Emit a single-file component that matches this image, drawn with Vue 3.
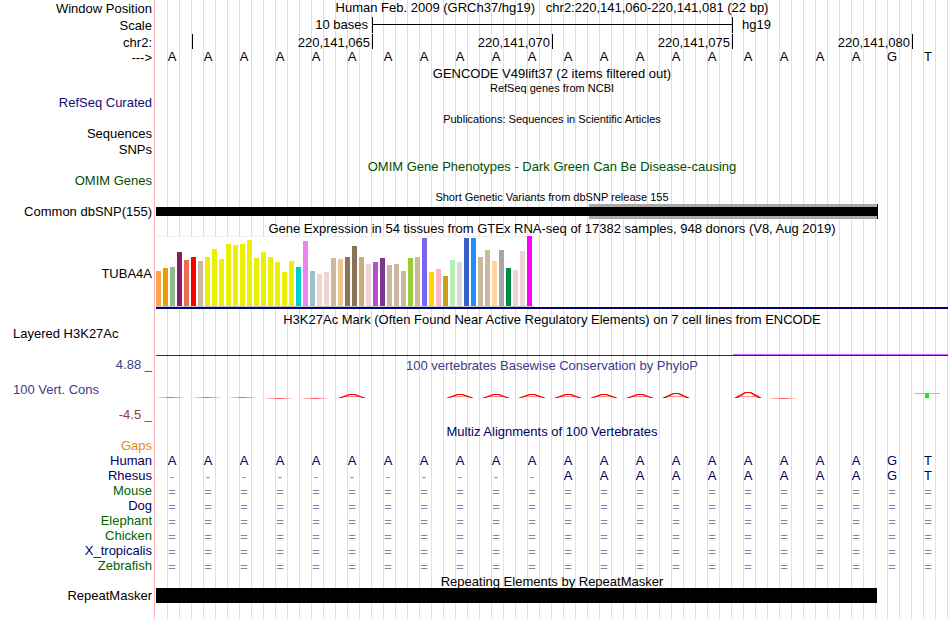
<template>
  <main class="browser">
    <div class="gutter"></div>
    <div class="guides">
      <span v-for="n in 66" :key="n" class="guide"></span>
    </div>

    <div class="tracks">
      <!-- Ruler -->
      <div class="row">
        <div class="label">Window Position</div>
        <h1 class="title">Human Feb. 2009 (GRCh37/hg19)&nbsp;&nbsp; chr2:220,141,060-220,141,081 (22 bp)</h1>
      </div>
      <div class="row">
        <div class="label">Scale</div>
        <div class="scale">
          <span class="scale-size">10 bases</span>
          <span class="scale-bar"><i></i></span>
          <span class="scale-db">hg19</span>
        </div>
      </div>
      <div class="row row-line">
        <div class="label">chr2:</div>
        <div class="ticks">
          <span v-for="(tick, i) in ticks" :key="i" class="tick">{{ tick }}</span>
        </div>
      </div>
      <div class="row">
        <div class="label">---&gt;</div>
        <div class="bases ruler-bases">
          <span v-for="(base, i) in human" :key="i">{{ base }}</span>
        </div>
      </div>

      <!-- Gene tracks -->
      <h2 class="title title-row">GENCODE V49lift37 (2 items filtered out)</h2>
      <h2 class="title title-row small">RefSeq genes from NCBI</h2>
      <div class="row row-item">
        <div class="label blue">RefSeq Curated</div>
      </div>
      <h2 class="title title-row small">Publications: Sequences in Scientific Articles</h2>
      <div class="row row-publication">
        <div class="label">Sequences</div>
      </div>
      <div class="row row-item">
        <div class="label">SNPs</div>
      </div>
      <h2 class="title title-row phenotype">OMIM Gene Phenotypes - Dark Green Can Be Disease-causing</h2>
      <div class="row row-item">
        <div class="label phenotype">OMIM Genes</div>
      </div>

      <!-- dbSNP -->
      <h2 class="title title-row small">Short Genetic Variants from dbSNP release 155</h2>
      <div class="row row-item">
        <div class="label">Common dbSNP(155)</div>
        <svg class="plot snp-plot" viewBox="0 0 792 18" preserveAspectRatio="none" shape-rendering="crispEdges">
          <rect x="433" y="1" width="288" height="15" fill="#a9a9a9" />
          <rect x="0" y="4" width="721" height="9" fill="#000" />
          <rect x="721" y="1" width="1" height="15" fill="#000" />
        </svg>
      </div>

      <!-- GTEx -->
      <h2 class="title">Gene Expression in 54 tissues from GTEx RNA-seq of 17382 samples, 948 donors (V8, Aug 2019)</h2>
      <div class="row row-gtex">
        <div class="label">TUBA4A</div>
        <div class="gtex">
          <div class="tissues">
            <span
              v-for="(tissue, i) in tissues"
              :key="i"
              class="tissue"
              :style="{ height: tissue.height + 'px', backgroundColor: tissue.color }"
            ></span>
          </div>
        </div>
      </div>

      <!-- H3K27Ac -->
      <div class="row row-h3k">
        <div class="label label-left">Layered H3K27Ac</div>
        <div class="h3k">
          <h2 class="title">H3K27Ac Mark (Often Found Near Active Regulatory Elements) on 7 cell lines from ENCODE</h2>
          <svg class="plot signal-plot" viewBox="0 0 792 2" preserveAspectRatio="none" shape-rendering="crispEdges">
            <rect x="577" y="0" width="215" height="1" fill="#cc66ff" />
            <rect x="0" y="1" width="792" height="1" fill="#5a1464" />
          </svg>
        </div>
      </div>

      <!-- Conservation -->
      <div class="row row-cons">
        <div class="cons-labels">
          <div class="label cons-high">4.88 _</div>
          <div class="label label-left cons-high">100 Vert. Cons</div>
          <div class="label cons-low">-4.5 _</div>
        </div>
        <div class="cons">
          <h2 class="title cons-high">100 vertebrates Basewise Conservation by PhyloP</h2>
          <svg class="plot cons-plot" viewBox="0 0 792 12" preserveAspectRatio="none">
            <g v-for="mark in phylop" :key="mark.base" :transform="`translate(${mark.base * 36} 0)`">
              <rect v-if="mark.height === 0" x="1" :y="mark.y" width="28" height="1" fill="url(#flat)" />
              <template v-else>
                <path d="M9 7.5H23" stroke="#ff9090" />
                <path :d="peak(mark.height)" fill="#f00" />
              </template>
            </g>
            <rect x="758" y="4" width="26" height="1" fill="#70f070" />
            <rect x="769" y="4" width="4" height="5" fill="#0f0" />
            <defs>
              <linearGradient id="flat">
                <stop offset="0" stop-color="#ff8080" stop-opacity="0.2" />
                <stop offset="0.5" stop-color="#ff5050" />
                <stop offset="1" stop-color="#ff8080" stop-opacity="0.2" />
              </linearGradient>
            </defs>
          </svg>
        </div>
      </div>

      <!-- Multiz -->
      <h2 class="title title-row multiz">Multiz Alignments of 100 Vertebrates</h2>
      <div class="row row-line">
        <div class="label gaps">Gaps</div>
      </div>
      <div v-for="species in alignments" :key="species.name" class="row row-line">
        <div class="label" :class="species.color">{{ species.name }}</div>
        <div class="bases aligned">
          <span v-for="(base, i) in species.bases" :key="i" :class="{ gap: base === '-' || base === '=' }">{{ base }}</span>
        </div>
      </div>

      <!-- RepeatMasker -->
      <div class="row row-repeat">
        <div class="label">RepeatMasker</div>
        <div class="repeat">
          <h2 class="title">Repeating Elements by RepeatMasker</h2>
          <svg class="plot repeat-plot" viewBox="0 0 792 15" preserveAspectRatio="none" shape-rendering="crispEdges">
            <rect x="0" y="0" width="721" height="15" fill="#000" />
          </svg>
        </div>
      </div>
    </div>
  </main>
</template>

<script setup>
const human = 'AAAAAAAAAAAAAAAAAAAAGT'.split('')
const unaligned = '='.repeat(22).split('')

const ticks = ['', '220,141,065', '220,141,070', '220,141,075', '220,141,080', '']

const alignments = [
  { name: 'Human', color: 'navy', bases: human },
  { name: 'Rhesus', color: 'navy', bases: '-----------AAAAAAAAAGT'.split('') },
  { name: 'Mouse', color: 'green', bases: unaligned },
  { name: 'Dog', color: 'navy', bases: unaligned },
  { name: 'Elephant', color: 'green', bases: unaligned },
  { name: 'Chicken', color: 'green', bases: unaligned },
  { name: 'X_tropicalis', color: 'navy', bases: unaligned },
  { name: 'Zebrafish', color: 'green', bases: unaligned }
]

// GTEx tissue colors, in track order
const tissueColors = [
  '#ffa54f', '#ee9a00', '#8fbc8f', '#8b1c62', '#ee6a50', '#ff0000', '#cdb79e',
  ...Array(13).fill('#eeee00'),
  '#00cdcd', '#ee82ee', '#9ac0cd', '#eed5d2', '#eed5d2', '#cdb79e', '#eec591',
  '#8b7355', '#8b7355', '#cdaa7d', '#eed5d2', '#b452cd', '#7a378b', '#cdb79e',
  '#cdb79e', '#cdb79e', '#9acd32', '#cdb79e', '#7a67ee', '#ffd700', '#ffb6c1',
  '#cd9b1d', '#b4eeb4', '#d9d9d9', '#3a5fcd', '#1e90ff', '#cdb79e', '#cdb79e',
  '#ffd39b', '#a6a6a6', '#008b45', '#eed5d2', '#eed5d2', '#ff00ff'
]

const tissueHeights = [
  35, 38, 39, 54, 46, 49, 45, 49, 57, 47, 62, 61, 62, 66, 48, 54, 49, 44,
  34, 45, 39, 65, 35, 32, 34, 48, 47, 49, 60, 49, 42, 44, 48, 41, 42, 35,
  48, 49, 68, 34, 37, 30, 46, 44, 68, 68, 49, 56, 45, 56, 38, 36, 55, 70
]

const tissues = tissueHeights.map((height, i) => ({ height, color: tissueColors[i] }))

// height 0 is a flat mark, drawn at y
const phylop = [
  { base: 0, height: 0, y: 8 },
  { base: 1, height: 0, y: 8 },
  { base: 2, height: 0, y: 8 },
  { base: 3, height: 0, y: 9 },
  { base: 4, height: 0, y: 9 },
  { base: 5, height: 4 },
  ...[8, 9, 10, 11, 12, 13].map((base) => ({ base, height: 4 })),
  { base: 14, height: 5 },
  { base: 16, height: 6 },
  { base: 17, height: 0, y: 9 }
]

function peak(height) {
  const top = 9 - height
  return `M2 9L13 ${top}H19L30 9H26L18 ${top + 1}H14L6 9Z`
}
</script>

<style>
body {
  margin: 0;
  background: #fff;
}
</style>

<style scoped>
.browser {
  display: grid;
  grid-template-columns: 154px 1fr;
  column-gap: 2px;
  min-height: 100vh;
  box-sizing: border-box;
  padding-right: 2px;
  font-family: "Liberation Sans", Arial, Helvetica, sans-serif;
  font-size: 13px;
  line-height: 17px;
  color: #000;
}

/* The guides run behind every track */
.gutter,
.guides,
.tracks {
  grid-row: 1;
}

.gutter {
  grid-column: 1;
  margin-right: -1px;
  border-right: 1px solid #ffb4b4;
}

.guides {
  grid-column: 2;
  display: flex;
}

.guide {
  flex: 1;
  border-right: 1px solid #dcdcf8;
}

.tracks {
  grid-column: 1 / -1;
  z-index: 1;
}

.row {
  display: grid;
  grid-template-columns: 154px 1fr;
  column-gap: 2px;
  height: 17px;
}

.row-line {
  height: 15px;
}

.row-publication {
  height: 16px;
}

.row-item {
  height: 18px;
}

.label {
  padding-right: 2px;
  text-align: right;
  white-space: nowrap;
}

.label-left {
  padding-left: 13px;
  text-align: left;
}

.title {
  margin: 0;
  font-size: 13px;
  font-weight: normal;
  line-height: 15px;
  text-align: center;
  white-space: nowrap;
}

.tracks > .title {
  padding-left: 156px;
}

.title-row {
  height: 13px;
}

.title-row:first-of-type {
  height: 15px;
}

.small {
  font-size: 11px;
}

.blue {
  color: #0c0c78;
}

.phenotype {
  color: #005000;
}

.navy,
.multiz {
  color: #000064;
}

.green {
  color: #006400;
}

.gaps {
  color: #e68c14;
}

.cons-high {
  color: #3c3c8c;
}

.cons-low {
  color: #8c3c3c;
}

.plot {
  display: block;
  width: 100%;
}

/* Ruler */
.scale {
  display: grid;
  grid-template-columns: 6fr 10fr 6fr;
  height: 16px;
  line-height: 15px;
}

.scale-size {
  padding-right: 4px;
  text-align: right;
}

.scale-bar {
  border-left: 1px solid #000;
}

.scale-bar i {
  display: block;
  height: 1px;
  margin-top: 7px;
  background: #000;
}

.scale-db {
  padding-left: 9px;
  border-left: 1px solid #000;
}

.ticks {
  display: grid;
  grid-template-columns: 1fr 5fr 5fr 5fr 5fr 1fr;
  grid-template-rows: 15px;
}

.tick {
  padding-right: 2px;
  text-align: right;
}

.tick + .tick {
  border-left: 1px solid #000;
}

.bases {
  display: grid;
  grid-template-columns: repeat(22, 1fr);
  text-align: center;
}

.bases span {
  padding-right: 4px;
}

.ruler-bases {
  line-height: 15px;
}

.aligned {
  color: #000064;
}

.gap {
  color: #8080b8;
  line-height: 19px;
}

.snp-plot {
  height: 18px;
}

/* GTEx */
.row-gtex {
  height: 73px;
}

.row-gtex .label {
  padding-top: 29px;
}

.gtex {
  border-bottom: 2px solid #000078;
}

.tissues {
  display: flex;
  align-items: flex-end;
  gap: 2px;
  box-sizing: border-box;
  width: 378px;
  height: 71px;
  border-bottom: 1px solid #c8c8c8;
  background: linear-gradient(#f0f0f0 1px, #fff 1px);
}

.tissue {
  width: 5px;
}

/* H3K27Ac */
.row-h3k {
  height: 47px;
}

.row-h3k .label {
  padding-top: 16px;
}

.h3k {
  padding-top: 3px;
}

.signal-plot {
  height: 2px;
  margin-top: 27px;
}

/* Conservation */
.row-cons {
  height: 68px;
}

.cons-labels {
  display: flex;
  flex-direction: column;
  gap: 8px;
}

.cons {
  padding-top: 2px;
}

.cons-plot {
  height: 12px;
  margin-top: 16px;
}

/* RepeatMasker */
.row-repeat {
  height: 31px;
}

.row-repeat .label {
  padding-top: 15px;
}

.repeat {
  padding-top: 2px;
}

.repeat .title {
  height: 14px;
}

.repeat-plot {
  height: 15px;
}
</style>
